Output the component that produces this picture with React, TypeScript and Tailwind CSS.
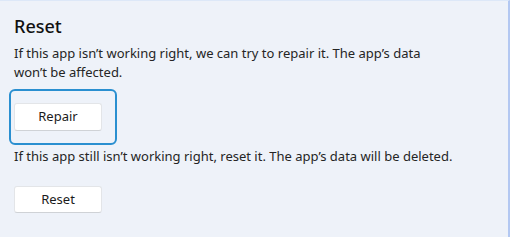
export default function App() {
  return (
    <div
      className="w-[510px] h-[237px] bg-[#eef2f9] border-r-2 border-r-[#b3c8f2] border-t border-t-[#dde8f8] text-[#1b1b1b] overflow-hidden"
      style={{ fontFamily: '"Noto Sans", "Open Sans", sans-serif' }}
    >
      <div className="pl-[14px] pt-[13px]">
        <h2 className="text-[18px] font-medium leading-[24px] text-[#111]">Reset</h2>
        <p className="mt-[6px] text-[13px] leading-[19px] w-[425px] text-[#252525]">
          If this app isn’t working right, we can try to repair it. The app’s data won’t be affected.
        </p>
        <div className="mt-[7px] -ml-[5px] w-[108px] h-[56px] rounded-[6px] border-2 border-[#2a8fd0] flex items-center pl-[3px]">
          <button className="w-[88px] h-[28px] bg-white rounded-[3px] border border-[#e3e5e8] border-b-[#cfd2d6] text-[13px] text-[#1b1b1b]">
            Repair
          </button>
        </div>
        <p className="mt-[2px] text-[13px] leading-[19px] text-[#252525]">
          If this app still isn’t working right, reset it. The app’s data will be deleted.
        </p>
        <button className="mt-[20px] w-[88px] h-[27px] bg-white rounded-[3px] border border-[#e3e5e8] border-b-[#cfd2d6] text-[13px] text-[#1b1b1b]">
          Reset
        </button>
      </div>
    </div>
  );
}
